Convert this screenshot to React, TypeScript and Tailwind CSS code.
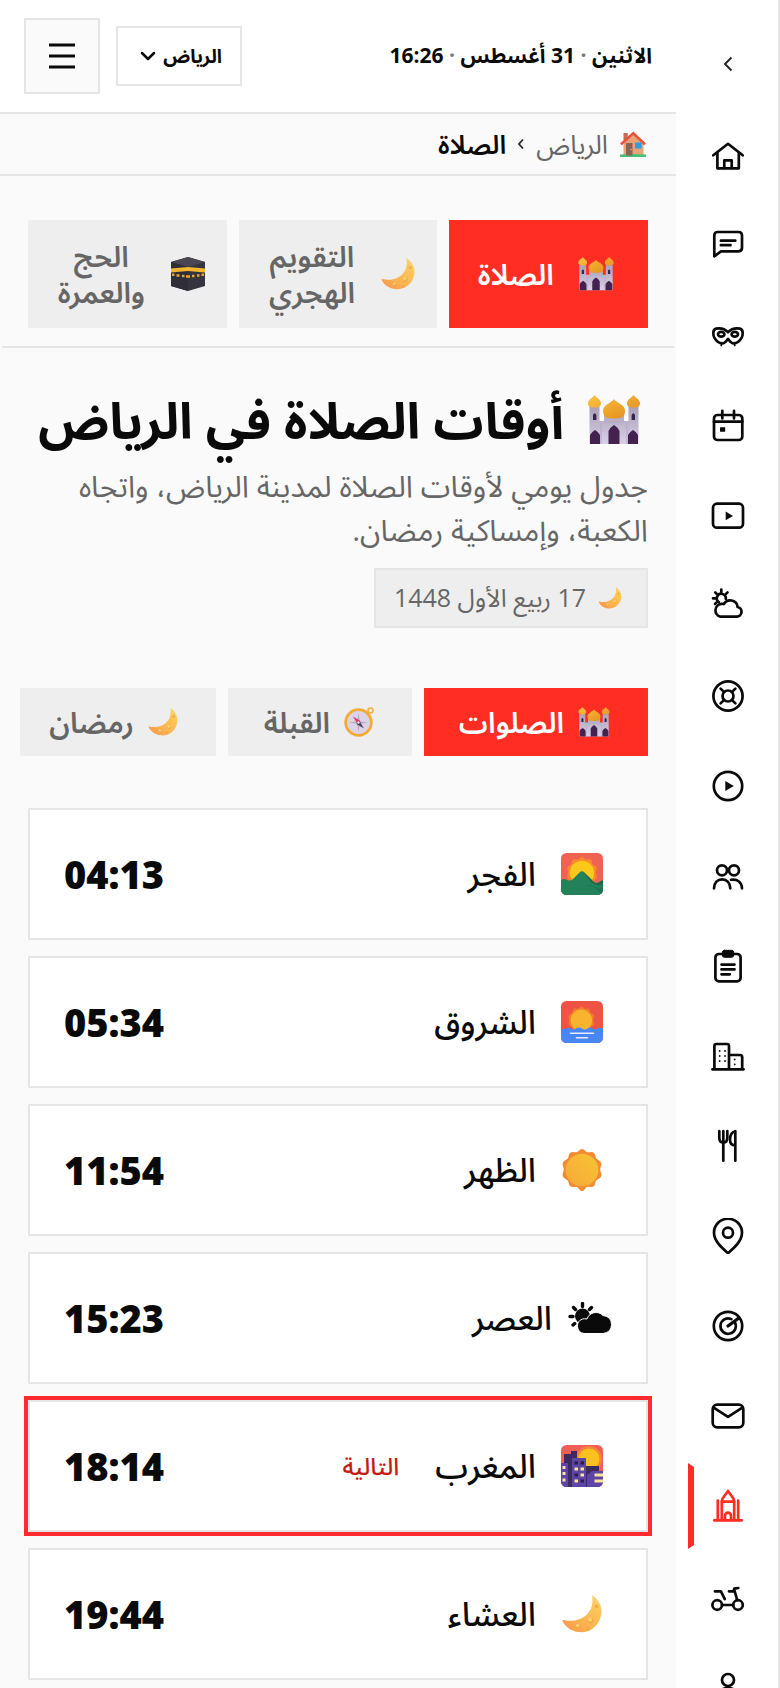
import React from "react";
import { ChevronDown } from "lucide-react";

/* ---------- sidebar line icons, drawn on a 36 unit grid ---------- */

const navItems: { label: string; active?: boolean; icon: React.ReactNode }[] = [
  {
    label: "الرئيسية",
    icon: (
      <>
        <path d="M3.3 17.3 18 5.8l14.7 11.5" />
        <path d="M7.4 14.5v15.8h21.4V14.5" />
        <path d="M14.3 30v-7.6h7.4V30" />
      </>
    ),
  },
  {
    label: "الأخبار",
    icon: (
      <>
        <path d="M4.3 28.3V7.5Q4.3 4 7.8 4h20.8Q32 4 32 7.5v12.3q0 3.5-3.4 3.5H11Z" />
        <path d="M10.9 12.7h14.4M10.9 17.2h9.6" />
      </>
    ),
  },
  {
    label: "الترفيه",
    icon: (
      <>
        <path d="M18 14.2c-3-3.2-8-4.4-12-3.6-3.3.8-3.6 6.5-1 10.2 2.3 3.4 5.5 5 8.5 4.4 2.5-.5 3.3-3 4.5-4.2 1.2 1.200 2 3.700 4.500 4.200 3 .6 6.200-1 8.500-4.400 2.600-3.700 2.300-9.400-1-10.200-4-.8-9 .4-12 3.600Z" />
        <ellipse cx="11.2" cy="16.3" rx="3.2" ry="2.4" />
        <ellipse cx="24.8" cy="16.3" rx="3.2" ry="2.4" />
        <path d="M11.3 27v.4M24.7 27v.4" strokeWidth="1.8" />
      </>
    ),
  },
  {
    label: "الفعاليات",
    icon: (
      <>
        <rect x="4" y="7" width="28.3" height="25" rx="3.6" />
        <path d="M4 13.7h28.3M12.3 2.9v7.6M24 2.9v7.6" />
        <rect x="10" y="19.2" width="5.2" height="4.6" rx=".5" fill="currentColor" stroke="none" />
      </>
    ),
  },
  {
    label: "الفيديو",
    icon: (
      <>
        <rect x="3" y="5.7" width="30" height="24" rx="4" />
        <path d="m15.7 13.6 7.3 4.3-7.3 4.3Z" fill="currentColor" stroke="none" />
      </>
    ),
  },
  {
    label: "الطقس",
    icon: (
      <>
        <path d="M10.5 28.7h16.3a4.9 4.9 0 0 0 .8-9.7 7.4 7.4 0 0 0-13.8-2.9c-.7-.3-1.5-.3-2.5-.2a6.5 6.5 0 0 0-.8 12.8Z" />
        <path d="M8.8 14a4.5 4.5 0 1 1 7-3.2M11.3 1.6v2.3M3 10.3h2.3M5.2 4.4l1.5 1.5M17.5 4.4 16 5.9M5 15.9l1.300-1.200" />
      </>
    ),
  },
  {
    label: "المساعدة",
    icon: (
      <>
        <circle cx="18" cy="18" r="14.6" />
        <circle cx="18" cy="18" r="5.5" />
        <path d="m10.6 10.6 3.3 3.3M25.4 10.6l-3.3 3.3M10.6 25.4l3.3-3.3M25.4 25.4l-3.3-3.3" />
      </>
    ),
  },
  {
    label: "مباشر",
    icon: (
      <>
        <circle cx="18" cy="18" r="14.2" />
        <path d="m15.3 12.9 8.5 5.1-8.5 5.1Z" fill="currentColor" stroke="none" />
      </>
    ),
  },
  {
    label: "المجتمع",
    icon: (
      <>
        <circle cx="12" cy="12.3" r="5" />
        <circle cx="24" cy="12.3" r="5" />
        <path d="M4 30.3c.2-5.5 3.6-9 8.100-9s7.900 3.500 8.200 9M21 21.800c6-1.200 10.700 2.200 11 8.500" />
      </>
    ),
  },
  {
    label: "الإعلانات",
    icon: (
      <>
        <rect x="5.4" y="6" width="25.2" height="27.3" rx="3.6" />
        <rect x="12.3" y="2.3" width="11.4" height="7" rx="2.2" fill="currentColor" strokeWidth="1" />
        <path d="M11.5 16.6h13M11.5 21.4h13M11.5 26.3h8.3" />
      </>
    ),
  },
  {
    label: "العقارات",
    icon: (
      <>
        <path d="M2.4 31.3h31.2M4.4 31V8q0-2 2-2H17q2 0 2 2v23M19 17h11q2.2 0 2.2 2.2V31" />
        <path
          d="M9.7 13v.1M15 13v.1M9.7 18v.1M15 18v.1M9.7 23v.1M15 23v.1M24.7 21.3v.1M24.7 26.3v.1"
          strokeWidth="1.8"
        />
      </>
    ),
  },
  {
    label: "المطاعم",
    icon: (
      <>
        <path d="M9.3 3.2v6.5c0 3 1.5 4.9 4 4.9s4-1.9 4-4.9V3.200M13.300 3.200v29.500" />
        <path d="M25.3 32.7V3.2c-3.5.8-5.3 4.3-5.3 8.5 0 3.500 1.500 5.600 5.300 5.600" />
      </>
    ),
  },
  {
    label: "الأماكن",
    icon: (
      <>
        <path d="M18 35.2C11.5 29.5 4 22.8 4 14.7a14 14 0 0 1 28 0c0 8.100-7.500 14.800-14 20.500Z" />
        <circle cx="18" cy="14.7" r="5" />
      </>
    ),
  },
  {
    label: "الرادار",
    icon: (
      <>
        <circle cx="18" cy="18" r="14.2" />
        <path d="M24.6 13.9a7.7 7.7 0 1 1-3.2-2.8" />
        <path d="m18 18 10.5-7.8" strokeWidth="3.3" />
      </>
    ),
  },
  {
    label: "الرسائل",
    icon: (
      <>
        <rect x="2.7" y="6.7" width="30.6" height="22.6" rx="4.5" />
        <path d="m4 9.800 14 9.100 14-9.100" />
      </>
    ),
  },
  {
    label: "الصلاة",
    active: true,
    icon: (
      <>
        <path d="M4.2 32.3h27.6M7.8 12.7V32M28.2 12.7V32M11.8 13.7V32M24.2 13.7V32M11.8 13.7h12.4" />
        <path d="M11.8 13.5C12 8.5 16 7 18 3c2 4 6 5.5 6.200 10.500M15 32v-4.300a3 3 0 0 1 6 0V32" />
      </>
    ),
  },
  {
    label: "التوصيل",
    icon: (
      <>
        <circle cx="7.2" cy="27" r="4.8" />
        <circle cx="28" cy="27" r="4.8" />
        <path d="M12 27h11.2M4.9 13.3h6l3.9 7.8M19 13.3h4.5l.8-2.6 4-.7M24.2 11.500l3 10.700" />
      </>
    ),
  },
  {
    label: "الحساب",
    icon: (
      <>
        <circle cx="18" cy="12" r="6" />
        <path d="M6 34c0-9 5-14 12-14s12 5 12 14" />
      </>
    ),
  },
];

/* ---------- coloured pictograms ---------- */

type PicProps = { className: string };

function Mosque({ className }: PicProps) {
  return (
    <svg viewBox="0 0 52 50" className={className} aria-hidden="true">
      <defs>
        <linearGradient id="mosque-wall" x1="0" y1="0" x2="0" y2="1">
          <stop offset="0" stopColor="#a9a0b8" />
          <stop offset="1" stopColor="#d9cfe6" />
        </linearGradient>
        <linearGradient id="mosque-dome" x1="0" y1="0" x2="1" y2="1">
          <stop offset="0" stopColor="#fdc33f" />
          <stop offset="1" stopColor="#e08a1c" />
        </linearGradient>
      </defs>
      <path d="M1.500 11h10v15h29V11h10v38h-49Z" fill="url(#mosque-wall)" />
      <path d="M16 20h20v8H16Z" fill="#b9aec9" />
      <path d="M13 28v21M39 28v21" stroke="#b3a8c4" strokeWidth="1" />
      <path d="M6.500 0c1.500 3 6.500 4 6.500 8.500 0 2.500-2 4-6.500 4S0 11 0 8.500C0 4 5 3 6.500 0ZM45.500 0c1.500 3 6.500 4 6.500 8.500 0 2.500-2 4-6.500 4s-6.500-1.500-6.500-4C39 4 44 3 45.500 0ZM26 4c2 4 11 5 11 12 0 3-1.500 5.500-3 6.500q-8 2-16 0c-1.500-1-3-3.500-3-6.500 0-7 9-8 11-12Z" fill="url(#mosque-dome)" />
      <path d="M5 25v-5q1.700-3.500 3.400 0v5ZM43.600 25v-5q1.700-3.500 3.400 0v5Z" fill="#33254e" />
      <path d="M2 49V40q1.500-3 5-5 3.500 2 5 5v9ZM40 49V40q1.500-3 5-5 3.500 2 5 5v9ZM20.500 49V36q1.500-3.500 5.500-6 4 2.500 5.500 6v13Z" fill="#43224f" />
    </svg>
  );
}

function Moon({ className }: PicProps) {
  return (
    <svg viewBox="0 0 42 40" className={className} aria-hidden="true">
      <defs>
        <linearGradient id="moon-fill" x1="0" y1="1" x2="1" y2="0">
          <stop offset="0" stopColor="#f98f4c" />
          <stop offset=".35" stopColor="#fbb050" />
          <stop offset=".75" stopColor="#fcc658" />
          <stop offset="1" stopColor="#f8d98d" />
        </linearGradient>
      </defs>
      <path d="M32.500.5C40 6 43 14 41 22 38 34 28 40 18 39 9 38 3.500 33 .5 27.500c-.3-1 .3-1.500 1.200-1.200C13 29 22 25.500 27.500 19 32 13.500 32.500 7 31.700 1c0-.6.3-.8.8-.5Z" fill="url(#moon-fill)" />
      <g fill="#eea23f" opacity=".75">
        <circle cx="17" cy="33" r="2.500" />
        <circle cx="30" cy="27" r="3" />
        <circle cx="36.500" cy="12" r="2" />
        <circle cx="27" cy="35.500" r="1.500" />
      </g>
      <g fill="#fdd070">
        <circle cx="16.500" cy="32" r="1.800" />
        <circle cx="29.500" cy="26" r="2.200" />
      </g>
    </svg>
  );
}

function Kaaba({ className }: PicProps) {
  return (
    <svg viewBox="0 0 34 34" className={className} aria-hidden="true">
      <path d="M17 0 34 5v24l-17 5-17-5V5Z" fill="#36343f" />
      <path d="m17 0 17 5-17 5L0 5Z" fill="#4a4753" />
      <path d="M17 10v24L0 29V5Z" fill="#2f2d38" />
      <path d="M0 11.500 17 10l17 1.500v4L17 14 0 15.500Z" fill="#f5b52e" />
      <path d="M1 17.800h2.500M5.500 18.500h3M11 19h2.500M15 19.500h4M21 19h2.500M26 18.500h2.500M30.500 17.800H33" stroke="#e9a62c" strokeWidth="2.600" />
    </svg>
  );
}

function House({ className }: PicProps) {
  return (
    <svg viewBox="0 0 26 26" className={className} aria-hidden="true">
      <path d="M3.500 2h4.200v7H3.500Z" fill="#c96a4e" />
      <path d="M3.500 12.500 13.500 3l10 9.500V24h-20Z" fill="#e8a478" />
      <path d="M0 12.500 13.300.5 26 12.500l-2 1.800L13.300 4 2 14.300Z" fill="#e5533a" />
      <path d="M0 23.500q13-1 26 0V26H0Z" fill="#44c176" />
      <path d="M6 12h6.500v12.500H6Z" fill="#8a6258" />
      <path d="M15 11.500h6.500v6H15Z" fill="#2f9be6" />
      <circle cx="11" cy="18.500" r=".7" fill="#f1c76a" />
    </svg>
  );
}

function Compass({ className }: PicProps) {
  return (
    <svg viewBox="0 0 30 30" className={className} aria-hidden="true">
      <circle cx="26.500" cy="3.500" r="2.500" fill="none" stroke="#f0b040" strokeWidth="1.600" />
      <circle cx="14.500" cy="15.500" r="12.800" fill="#dcd3e6" stroke="#f2ab37" strokeWidth="2.800" />
      <path d="m14.500 6 1.300 8.200 8.200 1.300-8.200 1.300-1.300 8.200-1.300-8.200L5 15.500l8.200-1.300Z" fill="#b3abc2" />
      <path d="M9 9.500 16.500 14l-3 3Z" fill="#e8345d" />
      <path d="M20 21.500 12.500 17 15.500 14Z" fill="#4b3f5c" />
      <circle cx="14.500" cy="15.500" r="1.200" fill="#e9e3f0" />
    </svg>
  );
}

const scallop =
  "M21 0c2.500 0 3.500 3 5.500 3.300 2 .3 4.200-1 6.200.4s1.300 4.300 2.500 5.700 4.200 2 5 4.400-1 4.500-1 6.700 1.800 4.300 1 6.700-3.800 3-5 4.400-.5 4.300-2.500 5.700-4.200.1-6.200.4S23.500 42 21 42s-3.500-4-5.500-4.300-4.200 1-6.200-.4-1.300-4.300-2.500-5.700-4.200-2-5-4.400 1-4.500 1-6.700-1.800-4.300-1-6.700 3.800-3 5-4.400.5-4.300 2.500-5.700 4.200-.1 6.200-.4S18.500 0 21 0Z";

function Sun({ className }: PicProps) {
  return (
    <svg viewBox="0 0 42 42" className={className} aria-hidden="true">
      <defs>
        <linearGradient id="sun-core" x1="1" y1="0" x2="0" y2="1">
          <stop offset="0" stopColor="#f7c533" />
          <stop offset="1" stopColor="#f6a93a" />
        </linearGradient>
      </defs>
      <path d={scallop} fill="#f58a35" />
      <circle cx="21" cy="21" r="16.300" fill="url(#sun-core)" />
    </svg>
  );
}

function Dawn({ className }: PicProps) {
  return (
    <svg viewBox="0 0 42 42" className={className} aria-hidden="true">
      <clipPath id="dawn-frame">
        <rect width="42" height="42" rx="5.500" />
      </clipPath>
      <g clipPath="url(#dawn-frame)">
        <rect width="42" height="42" fill="#ee6352" />
        <g transform="translate(5 4) scale(.76)">
          <path d={scallop} fill="#f88a2c" />
          <circle cx="21" cy="21" r="16" fill="#fcc81c" />
        </g>
        <path d="M0 27q3-2 6 0 3 1.500 6-1l6.500-6.500q2.500-2.500 5 0L30 26q3 4 6 4l6-1v13H0Z" fill="#238259" />
        <path d="m22 19 8 10q5 4 12 3v-5l-6 3q-3 1-6-4Z" fill="#1a6b4c" />
        <path d="M24 32q9 0 13 6l5 4v-8q-6 2-12-2Z" fill="#1d7450" />
      </g>
    </svg>
  );
}

function Sunrise({ className }: PicProps) {
  return (
    <svg viewBox="0 0 42 42" className={className} aria-hidden="true">
      <clipPath id="sunrise-frame">
        <rect width="42" height="42" rx="5.500" />
      </clipPath>
      <g clipPath="url(#sunrise-frame)">
        <rect width="42" height="42" fill="#ee5346" />
        <g transform="translate(6.500 5.500) scale(.66)">
          <path d={scallop} fill="#f27a2d" />
          <circle cx="21" cy="21" r="16.500" fill="#f9b32e" />
        </g>
        <path d="M0 27.500q2.500 1.500 5 0t5 0q2.500 2 5 0t6 0q3 2 5.500 0t5 0q2.500 1.500 5 0t5.500 0V42H0Z" fill="#4686f5" />
        <path d="M9.500 32.300h23M15.500 36.700h11" stroke="#e4edff" strokeWidth="1.600" strokeLinecap="round" />
      </g>
    </svg>
  );
}

function CitySunset({ className }: PicProps) {
  return (
    <svg viewBox="0 0 42 42" className={className} aria-hidden="true">
      <clipPath id="city-frame">
        <rect width="42" height="42" rx="5.500" />
      </clipPath>
      <g clipPath="url(#city-frame)">
        <rect width="42" height="42" fill="#ee6057" />
        <circle cx="28" cy="14" r="13" fill="#f5833a" />
        <circle cx="28" cy="14" r="10.500" fill="#fbc11f" />
        <path d="M3 42V9h7V6h6v8h9v7h13v21Z" fill="#3e2a63" />
        <path d="M0 42V18h7v24ZM11 42V13h14v29ZM26 42V30l5-4h11v16Z" fill="#5d45a4" />
        <path d="M1.500 21h3v3h-3ZM1.500 27h3v3h-3ZM1.500 33.500h3v3h-3ZM13.500 22.500h3.500v3h-3.500ZM13.500 34.500h3.500v3h-3.500ZM19.500 22.500H23v3h-3.500ZM19.500 28.500H23v3h-3.500ZM33.500 28.500H42v3h-8.500ZM33.500 34.500H42v3h-8.500Z" fill="#f9e49a" />
        <path d="M13.500 16.500h3.500v3h-3.500ZM19.500 16.500H23v3h-3.500ZM13.500 28.500h3.500v3h-3.500ZM19.500 34.500H23v3h-3.500Z" fill="#2c1c49" />
      </g>
    </svg>
  );
}

function SunCloud({ className }: PicProps) {
  return (
    <svg viewBox="0 0 44 32" className={className} fill="#0a0a0a" aria-hidden="true">
      <circle cx="14.500" cy="14" r="7.500" />
      <path
        d="M14.500 1.500v3M2 14.500h3M5.500 5.500l2 2M23.500 5.500l-2 2M5 23l1.700-1.500"
        stroke="#0a0a0a"
        strokeWidth="3.400"
        strokeLinecap="round"
      />
      <path
        d="M16 31.500a7.500 7.500 0 0 1-1.500-14.500q2-.5 4.500 0A9.500 9.500 0 0 1 35 13.500q8.500 1 8.500 9T35 31.500Z"
        stroke="#fff"
        strokeWidth="1"
      />
    </svg>
  );
}

/* ---------- page data ---------- */

const sections = [
  { label: "الصلاة", Icon: Mosque, size: "h-[34px] w-9", active: true },
  { label: "التقويم الهجري", Icon: Moon, size: "h-8 w-[34px]" },
  { label: "الحج والعمرة", Icon: Kaaba, size: "size-[34px]" },
];

const views = [
  { label: "الصلوات", Icon: Mosque, size: "h-[30px] w-8", width: "w-56 pr-9.5", active: true },
  { label: "القبلة", Icon: Compass, size: "size-[30px]", width: "w-46 pr-9.5" },
  { label: "رمضان", Icon: Moon, size: "h-7 w-[30px]", width: "w-49 pr-9.5" },
];

const prayers = [
  { name: "الفجر", time: "04:13", Icon: Dawn, box: "w-15", size: "size-[42px]" },
  { name: "الشروق", time: "05:34", Icon: Sunrise, box: "w-15", size: "size-[42px]" },
  { name: "الظهر", time: "11:54", Icon: Sun, box: "w-15", size: "size-[42px]" },
  { name: "العصر", time: "15:23", Icon: SunCloud, box: "w-11", size: "h-8 w-11" },
  { name: "المغرب", time: "18:14", Icon: CitySunset, box: "w-15", size: "size-[42px]", next: true },
  { name: "العشاء", time: "19:44", Icon: Moon, box: "w-15", size: "h-[38px] w-10" },
];

export default function App() {
  return (
    <div
      dir="rtl"
      className="flex min-h-screen bg-[#fafafa] font-['Open_Sans','Noto_Sans_Arabic','DejaVu_Sans',sans-serif] text-[#0a0a0a]"
    >
      <aside className="sticky top-0 h-screen w-26 shrink-0 overflow-hidden border-r-2 border-[#e5e5e5] bg-white pl-0.5">
        <button type="button" aria-label="طي القائمة" className="flex h-[111px] w-full items-center justify-center pt-4">
          <svg viewBox="0 0 10 16" className="h-4 w-[10px] fill-none stroke-[#262626] stroke-2" aria-hidden="true">
            <path d="M8.500 1.500 2 8l6.500 6.500" />
          </svg>
        </button>
        <nav>
          {navItems.map((item) => (
            <a
              key={item.label}
              href="#"
              aria-label={item.label}
              className={
                item.active
                  ? "relative flex h-[90px] items-center justify-center text-[#ff2d22]"
                  : "flex h-[90px] items-center justify-center"
              }
            >
              {item.active && (
                <span className="absolute left-2.5 top-0.5 h-[86px] w-1.5 bg-[#ff2a2a] [clip-path:polygon(0_0,100%_4px,100%_82px,0_100%)]" />
              )}
              <svg
                viewBox="0 0 36 36"
                className="size-9 fill-none stroke-current stroke-[2.7] [stroke-linecap:round] [stroke-linejoin:round]"
                aria-hidden="true"
              >
                {item.icon}
              </svg>
            </a>
          ))}
        </nav>
      </aside>

      <div className="min-w-0 flex-1">
        <header className="flex h-[114px] items-center gap-4 border-b-2 border-[#e5e5e5] bg-white px-6">
          <p className="flex-1 whitespace-nowrap text-[21px] font-bold">
            الاثنين <span className="text-[#777]">·</span> 31 أغسطس <span className="text-[#777]">·</span> 16:26
          </p>
          <div className="relative">
            <select
              aria-label="المدينة"
              className="h-15 w-[126px] appearance-none border-2 border-[#e5e5e5] bg-white pr-4.5 text-[19px] font-bold"
            >
              <option>الرياض</option>
            </select>
            <ChevronDown className="pointer-events-none absolute left-5 top-4.5 size-6" strokeWidth={2.5} />
          </div>
          <button
            type="button"
            aria-label="القائمة"
            className="flex size-19 items-center justify-center border-2 border-[#e5e5e5] bg-[#fafafa]"
          >
            <svg viewBox="0 0 26 26" className="size-[26px] stroke-[#0a0a0a] stroke-3" aria-hidden="true">
              <path d="M0 2h26M0 13h26M0 24h26" />
            </svg>
          </button>
        </header>

        <nav aria-label="مسار التنقل" className="flex h-[62px] items-center gap-3 border-b-2 border-[#e5e5e5] px-7.5 text-[26px] leading-8">
          <a href="#" className="flex items-center gap-3 text-[#666]">
            <House className="size-[26px]" />
            الرياض
          </a>
          <svg viewBox="0 0 6 12" className="h-3 w-1.5 fill-none stroke-[#262626] stroke-[1.8]" aria-hidden="true">
            <path d="M5 1.500 1 6l4 4.500" />
          </svg>
          <span className="font-semibold">الصلاة</span>
        </nav>

        <nav aria-label="الأقسام" className="mx-0.5 grid grid-cols-3 gap-3 border-b-2 border-[#e5e5e5] px-[26px] pb-4.5 pt-11">
          {sections.map(({ label, Icon, size, active }) => (
            <a
              key={label}
              href="#"
              className={
                active
                  ? "flex h-27 items-center gap-3 bg-[#ff2d22] pl-4 pr-8.5 text-[29px] font-semibold leading-9 text-white"
                  : "flex h-27 items-center gap-3 bg-[#eee] pl-4 pr-5.5 text-[29px] font-semibold leading-9 text-[#666]"
              }
            >
              <Icon className={`${size} shrink-0`} />
              <span className="flex-1 text-center">{label}</span>
            </a>
          ))}
        </nav>

        <main className="px-7 pb-1">
          <h1 className="flex items-center gap-6 whitespace-nowrap pr-2 pt-9 text-[50px] font-bold leading-[72px]">
            <Mosque className="h-[50px] w-[52px] shrink-0" />
            أوقات الصلاة في الرياض
          </h1>
          <p className="mt-2 text-[30px] leading-11 text-[#666]">
            جدول يومي لأوقات الصلاة لمدينة الرياض، واتجاه الكعبة، وإمساكية رمضان.
          </p>
          <p className="mt-4 flex h-15 w-fit items-center gap-3 border-2 border-[#e5e5e5] bg-[#eee] pl-4.5 pr-6 text-[25px] text-[#666]">
            <Moon className="h-[22px] w-6" />
            17 ربيع الأول 1448
          </p>

          <div role="tablist" className="-ml-5 mt-15 flex gap-3">
            {views.map(({ label, Icon, size, width, active }) => (
              <button
                key={label}
                type="button"
                role="tab"
                aria-selected={!!active}
                className={
                  active
                    ? `${width} flex h-17 shrink-0 items-center gap-3.5 bg-[#ff2d22] text-[29px] font-semibold text-white`
                    : `${width} flex h-17 shrink-0 items-center gap-3.5 bg-[#eee] text-[29px] font-semibold text-[#666]`
                }
              >
                <Icon className={`${size} shrink-0`} />
                {label}
              </button>
            ))}
          </div>

          <ul className="mt-13 flex flex-col gap-4">
            {prayers.map(({ name, time, Icon, box, size, next }) => (
              <li
                key={name}
                className={
                  next
                    ? "flex h-33 items-center border-2 border-[#e5e5e5] bg-white px-8.5 ring-4 ring-[#ff2a2d]"
                    : "flex h-33 items-center border-2 border-[#e5e5e5] bg-white px-8.5"
                }
              >
                <span className={`${box} flex shrink-0 justify-center`}>
                  <Icon className={size} />
                </span>
                <span className="pr-4 text-[33px] font-medium">{name}</span>
                {next && <span className="pr-9 text-[24px] font-medium text-[#c41c14]">التالية</span>}
                <time className="mr-auto text-[38px] font-extrabold">{time}</time>
              </li>
            ))}
          </ul>
        </main>
      </div>
    </div>
  );
}
